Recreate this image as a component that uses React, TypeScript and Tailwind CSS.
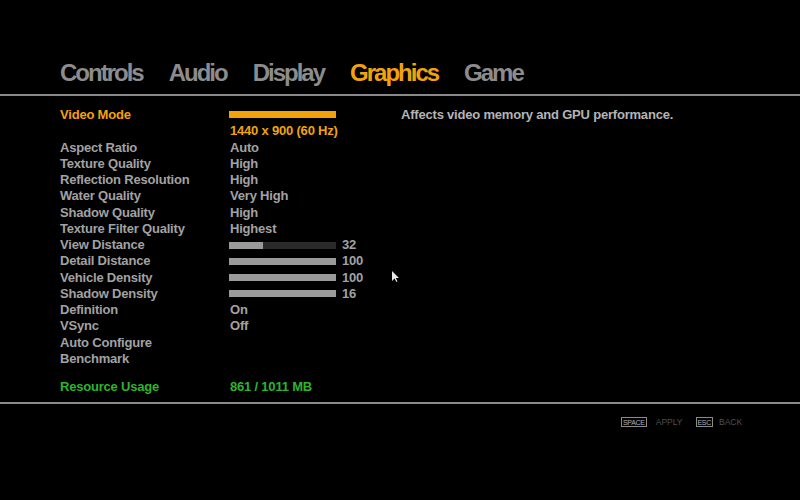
const tabs = ['Controls', 'Audio', 'Display', 'Graphics', 'Game']

type Row = {
    label: string
    value?: string
    slider?: number
    num?: string
}

const rows: Row[] = [
    { label: 'Aspect Ratio', value: 'Auto' },
    { label: 'Texture Quality', value: 'High' },
    { label: 'Reflection Resolution', value: 'High' },
    { label: 'Water Quality', value: 'Very High' },
    { label: 'Shadow Quality', value: 'High' },
    { label: 'Texture Filter Quality', value: 'Highest' },
    { label: 'View Distance', slider: 32, num: '32' },
    { label: 'Detail Distance', slider: 100, num: '100' },
    { label: 'Vehicle Density', slider: 100, num: '100' },
    { label: 'Shadow Density', slider: 100, num: '16' },
    { label: 'Definition', value: 'On' },
    { label: 'VSync', value: 'Off' },
    { label: 'Auto Configure' },
    { label: 'Benchmark' },
]

function Key({ k }: { k: string }) {
    return (
        <span className="flex h-[10px] items-center border border-[#8a8a8a] px-[1px] text-[7px] leading-none tracking-[-0.3px] text-[#b0b0b0]">
            {k}
        </span>
    )
}

export default function App() {
    return (
        <div
            className="relative h-[500px] w-[800px] overflow-hidden bg-black text-[13px] font-bold text-[#a2a2a2]"
            style={{ fontFamily: '"Liberation Sans", Arial, sans-serif' }}
        >
            {/* Tabs */}
            <div className="flex h-[94px] items-end gap-[26px] pb-[9px] pl-[60px] text-[24px] leading-none tracking-[-2px] text-[#8c8c8c]">
                {tabs.map(t => (
                    <span key={t} className={t === 'Graphics' ? 'text-[#f2a30c]' : ''}>
                        {t}
                    </span>
                ))}
            </div>
            <div className="h-[2px] bg-[#8a8a8a]" />

            {/* Settings */}
            <div className="flex h-[306px] pt-[11px] leading-[16.25px] tracking-[-0.2px]">
                <div className="flex w-[341px] shrink-0 flex-col pl-[60px]">
                    <div className="flex h-[16.25px] text-[#f2a30c]">
                        <span className="w-[169px] shrink-0">Video Mode</span>
                        <span className="mt-[4px] h-[7px] w-[107px] bg-[#f2a30c]" />
                    </div>
                    <div className="flex h-[16.25px] text-[#f2a30c]">
                        <span className="w-[170px] shrink-0" />
                        <span>1440 x 900 (60 Hz)</span>
                    </div>
                    {rows.map(r => (
                        <div key={r.label} className="flex h-[16.25px] items-center">
                            <span className="w-[169px] shrink-0">{r.label}</span>
                            {r.value && <span className="pl-[1px]">{r.value}</span>}
                            {r.slider !== undefined && (
                                <div className="flex items-center gap-[6px]">
                                    <div className="h-[7px] w-[107px] shrink-0 bg-[#2a2a2a]">
                                        <div className="h-full bg-[#9a9a9a]" style={{ width: `${r.slider}%` }} />
                                    </div>
                                    <span>{r.num}</span>
                                </div>
                            )}
                        </div>
                    ))}
                    <div className="mt-[12px] flex h-[16.25px] text-[#2db42d]">
                        <span className="w-[170px] shrink-0">Resource Usage</span>
                        <span>861 / 1011 MB</span>
                    </div>
                </div>
                <div className="pl-[60px] text-[#b4b4b4]">Affects video memory and GPU performance.</div>
            </div>

            <div className="h-[2px] bg-[#8a8a8a]" />

            {/* Footer */}
            <div className="flex items-center pl-[621px] pt-[13px] text-[8.5px] font-normal leading-none text-[#505050]">
                <Key k="SPACE" />
                <span className="ml-[9px]">APPLY</span>
                <span className="ml-[13px]">
                    <Key k="ESC" />
                </span>
                <span className="ml-[6px]">BACK</span>
            </div>

            {/* Mouse cursor */}
            <svg className="absolute left-[391px] top-[270px]" width="9" height="13" viewBox="0 0 9 13">
                <path d="M1 1 L1 11 L3.5 8.5 L5.5 12 L6.5 11.5 L4.8 8 L8 8 Z" fill="#e8e8e8" />
            </svg>
        </div>
    )
}
